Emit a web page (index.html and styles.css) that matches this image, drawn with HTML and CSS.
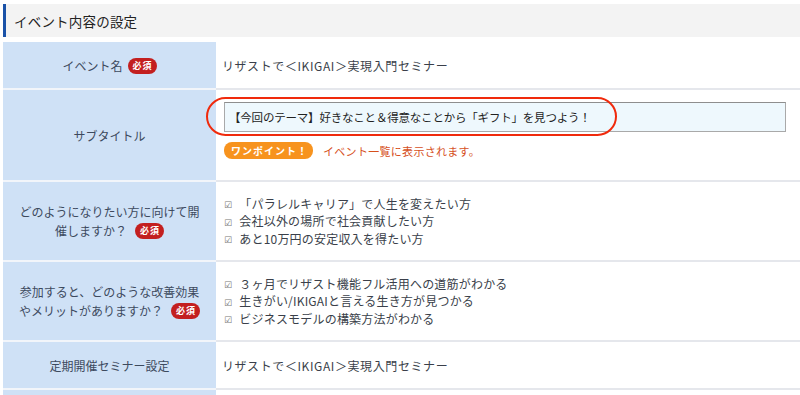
FILE: index.html
```
<!DOCTYPE html>
<html lang="ja">
<head>
<meta charset="utf-8">
<link rel="stylesheet" href="styles.css">
</head>
<body>
<div class="page">
  <div class="section-title">イベント内容の設定</div>
  <div class="form">
    <div class="row r1">
      <div class="label">イベント名<span class="req">必須</span></div>
      <div class="value">リザストで＜IKIGAI＞実現入門セミナー</div>
    </div>
    <div class="row r2">
      <div class="label">サブタイトル</div>
      <div class="value sub">
        <div class="input">【今回のテーマ】好きなこと＆得意なことから「ギフト」を見つよう！</div>
        <div class="hint"><span class="point">ワンポイント！</span><span class="hint-text">イベント一覧に表示されます。</span></div>
        <div class="oval"></div>
      </div>
    </div>
    <div class="row r3">
      <div class="label">どのようになりたい方に向けて開催しますか？<span class="req">必須</span></div>
      <div class="value">
        <ul class="checks">
          <li><span class="ck">☑</span>「パラレルキャリア」で人生を変えたい方</li>
          <li><span class="ck">☑</span>会社以外の場所で社会貢献したい方</li>
          <li><span class="ck">☑</span>あと10万円の安定収入を得たい方</li>
        </ul>
      </div>
    </div>
    <div class="row r3">
      <div class="label">参加すると、どのような改善効果やメリットがありますか？<span class="req">必須</span></div>
      <div class="value">
        <ul class="checks">
          <li><span class="ck">☑</span>３ヶ月でリザスト機能フル活用への道筋がわかる</li>
          <li><span class="ck">☑</span>生きがい/IKIGAIと言える生き方が見つかる</li>
          <li><span class="ck">☑</span>ビジネスモデルの構築方法がわかる</li>
        </ul>
      </div>
    </div>
    <div class="row r1">
      <div class="label">定期開催セミナー設定</div>
      <div class="value">リザストで＜IKIGAI＞実現入門セミナー</div>
    </div>
    <div class="row r1">
      <div class="label"></div>
      <div class="value"></div>
    </div>
  </div>
</div>
</body>
</html>
```
FILE: styles.css
```
html, body {
  margin: 0;
  padding: 0;
  background: #fff;
  overflow: hidden;
}
body {
  font-family: "Noto Sans CJK JP", "Noto Sans", sans-serif;
  font-size: 12px;
  color: #3a3f4a;
}
.page {
  padding: 4px 0 0 3px;
}
.section-title {
  height: 33px;
  background: #f3f3f3;
  border-left: 3px solid #1a52a8;
  padding-left: 8px;
  display: flex;
  align-items: center;
  font-size: 13.5px;
  letter-spacing: 0.2px;
  color: #222;
}
.form {
  margin-top: 5px;
}
.row {
  display: grid;
  grid-template-columns: 213px 1fr;
}
.r1 { height: 48px; }
.r2 { height: 92px; }
.r3 { height: 80px; }
.label {
  background: #cfe1f6;
  border-bottom: 2px solid #f2f5fa;
  color: #3d4a5e;
  display: flex;
  align-items: center;
  justify-content: center;
  text-align: center;
  padding: 0 12px;
  line-height: 19px;
}
.r3 .label {
  display: block;
  padding: 20px 12px 0;
}
.req {
  display: inline-block;
  background: #c31f1f;
  color: #fff;
  font-size: 9px;
  font-weight: bold;
  letter-spacing: 1px;
  line-height: 16px;
  height: 16px;
  padding: 0 4px 0 5px;
  border-radius: 8px;
  margin-left: 5px;
  vertical-align: top;
  margin-top: 1.5px;
}
.r3 .req {
  margin-left: 8px;
}
.value {
  border-bottom: 2px solid #e5e7ec;
  padding-left: 6px;
  display: flex;
  align-items: center;
  letter-spacing: 0.6px;
  position: relative;
}
.value.sub {
  flex-direction: column;
  align-items: flex-start;
  justify-content: flex-start;
  padding-top: 12px;
  padding-left: 8px;
  letter-spacing: 0;
}
.input {
  width: 556px;
  height: 28px;
  border: 1px solid #a9a9a9;
  border-top-color: #8e8e8e;
  background: #eef8fd;
  color: #222;
  display: flex;
  align-items: center;
  padding-left: 4px;
  font-size: 11.5px;
  letter-spacing: -0.2px;
}
.hint {
  margin-top: 10px;
  display: flex;
  align-items: center;
}
.point {
  display: inline-block;
  background: #f7931e;
  color: #fff;
  font-size: 10px;
  font-weight: bold;
  letter-spacing: 1px;
  height: 17px;
  line-height: 17px;
  padding: 0 5px 0 7px;
  border-radius: 8px;
}
.hint-text {
  margin-left: 10px;
  font-size: 11px;
  color: #d6501c;
  letter-spacing: 0.3px;
}
.oval {
  position: absolute;
  left: -10px;
  top: 7px;
  width: 407px;
  height: 35px;
  border: 2.5px solid #f02a0c;
  border-radius: 20px;
  pointer-events: none;
}
.checks {
  list-style: none;
  margin: 0;
  padding: 0 0 0 2px;
  font-size: 12px;
  letter-spacing: 0.2px;
}
.checks li {
  height: 17.5px;
  line-height: 17.5px;
  white-space: nowrap;
}
.ck {
  display: inline-block;
  font-family: "DejaVu Sans", sans-serif;
  font-size: 9px;
  line-height: 10px;
  color: #777;
  margin-right: 7px;
  vertical-align: middle;
}
```
